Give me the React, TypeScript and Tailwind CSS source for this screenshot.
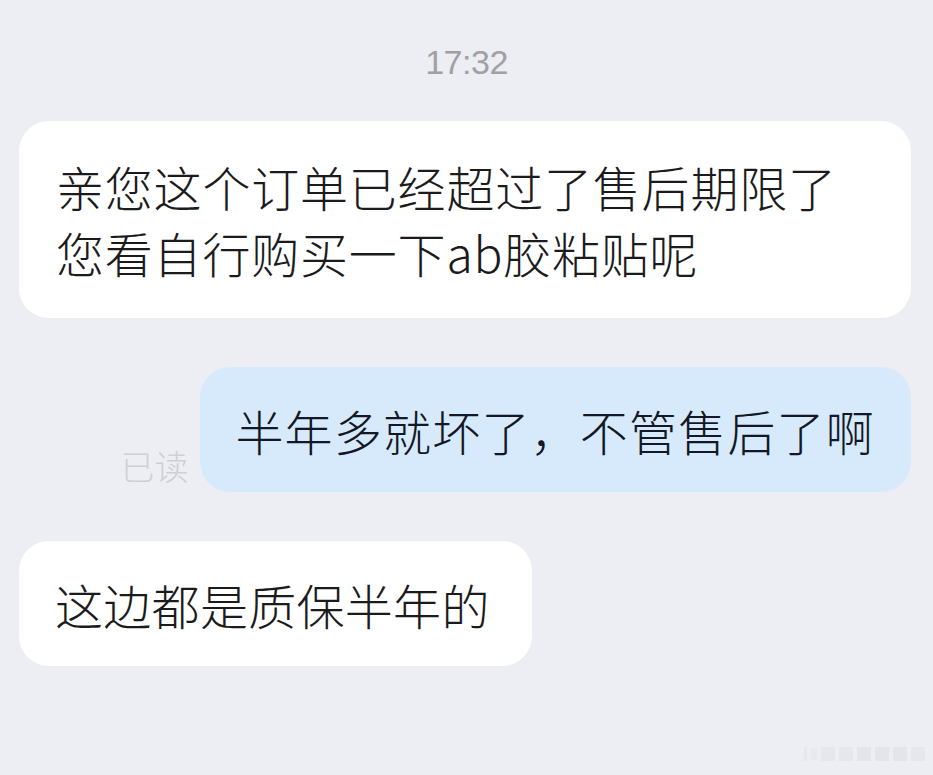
import React from 'react';

const cjk = { fontFamily: '"Noto Sans CJK SC", "Noto Sans", sans-serif' };

export default function App() {
  return (
    <div className="relative w-[933px] h-[775px] bg-[#edeef3] overflow-hidden font-light" style={cjk}>
      <div className="pt-[42px] flex justify-center">
        <span className="text-[34px] leading-[40px] text-[#a0a0a5] font-normal tracking-[-0.5px]" style={{ fontFamily: '"Liberation Sans", sans-serif' }}>
          17:32
        </span>
      </div>

      {/* 对方消息 */}
      <div className="mt-[39px] px-[19px]">
        <div className="w-[892px] bg-white rounded-[30px] pl-[37px] pr-[30px] pt-[32px] pb-[33px] text-[48px] leading-[66px] text-[#1b1b1d] tracking-[0.8px]">
          亲您这个订单已经超过了售后期限了
          <br />
          您看自行购买一下ab胶粘贴呢
        </div>
      </div>

      {/* 我的消息 */}
      <div className="mt-[49px] pr-[22px] flex justify-end items-end gap-[12px]">
        <span className="text-[34px] leading-[40px] mb-[6px] text-[#cfcfd4]">已读</span>
        <div className="bg-[#d7eafb] rounded-[30px] pl-[35px] pr-[36px] pt-[30px] pb-[29px] text-[48px] leading-[66px] text-[#121826] tracking-[1.2px]">
          半年多就坏了，不管售后了啊
        </div>
      </div>

      <div className="mt-[49px] px-[19px] flex">
        <div className="bg-white rounded-[30px] pl-[36px] pr-[42px] pt-[30px] pb-[29px] text-[48px] leading-[66px] text-[#1b1b1d] tracking-[0.3px]">
          这边都是质保半年的
        </div>
      </div>

      {/* 水印 */}
      <div className="absolute right-[8px] bottom-[14px] flex items-center gap-[4px] opacity-40">
        <div className="w-[3px] h-[14px] bg-[#dcdce0]" />
        <div className="w-[6px] h-[12px] bg-[#e2e2e6]" />
        <div className="w-[14px] h-[14px] bg-[#dedee2]" />
        <div className="w-[14px] h-[14px] bg-[#dcdce0]" />
        <div className="w-[14px] h-[14px] bg-[#d8d8dc]" />
        <div className="w-[14px] h-[14px] bg-[#d8d8dc]" />
        <div className="w-[14px] h-[14px] bg-[#d8d8dc]" />
        <div className="w-[14px] h-[14px] bg-[#dcdce0]" />
      </div>
    </div>
  );
}
